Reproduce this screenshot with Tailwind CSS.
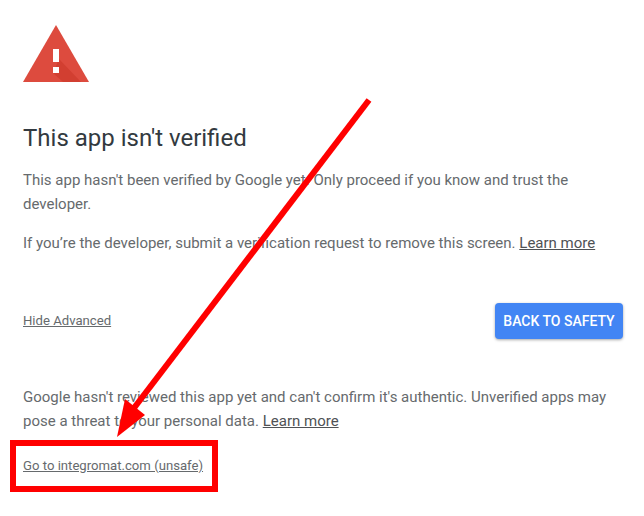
<!DOCTYPE html>
<html lang="en">
<head>
    <meta charset="UTF-8">
    <title>This app isn't verified</title>
    <script src="https://cdn.jsdelivr.net/npm/@tailwindcss/browser@4"></script>
</head>
<body class="bg-white font-['Roboto',sans-serif] overflow-hidden">
    <div class="relative w-[644px] h-[516px] overflow-hidden">
        <main class="pl-[23px] pr-[21px] pt-[25px]">
            <!-- warning triangle -->
            <svg width="66" height="58" viewBox="0 0 66 58" class="block">
                <path d="M33 0 L66 57 L0 57 Z" fill="#dd4b3e"/>
                <path d="M36 34 L58 57 L40 57 L30 48 Z" fill="#d23f31"/>
                <rect x="30" y="24" width="6" height="13" fill="#fff"/>
                <rect x="30" y="42" width="6" height="6" fill="#fff"/>
            </svg>

            <h1 class="mt-[39px] text-[24px] leading-[32px] text-[#333a40]">This app isn't verified</h1>

            <p class="mt-[14px] text-[15px] leading-[24px] text-[#666a6d]">This app hasn't been verified by Google yet. Only proceed if you know and trust the developer.</p>
            <p class="mt-[15px] text-[15px] leading-[24px] text-[#666a6d]">If you’re the developer, submit a verification request to remove this screen. <a class="underline text-[#4f5255]">Learn more</a></p>

            <div class="mt-[48px] flex items-center justify-between">
                <a class="text-[13.15px] underline text-[#666a6d]">Hide Advanced</a>
                <button class="w-[128px] h-[36px] rounded-[4px] bg-[#4285f4] text-white text-[14px] font-medium shadow-[0_1px_3px_rgba(0,0,0,0.35)]">BACK TO SAFETY</button>
            </div>

            <p class="mt-[46px] text-[15px] leading-[24px] text-[#666a6d]">Google hasn't reviewed this app yet and can't confirm it's authentic. Unverified apps may pose a threat to your personal data. <a class="underline text-[#4f5255]">Learn more</a></p>
            <a class="block mt-[25px] text-[13.15px] leading-[16px] underline text-[#666a6d]">Go to integromat.com (unsafe)</a>
        </main>

        <!-- red annotation drawn over the page -->
        <svg class="absolute inset-0" width="644" height="516" viewBox="0 0 644 516">
            <path d="M369 100 L134 408" stroke="#ff0000" stroke-width="6" fill="none"/>
            <path d="M117 437 L125 399 L145 415 Z" fill="#ff0000"/>
            <rect x="13" y="443" width="202" height="46" stroke="#ff0000" stroke-width="6" fill="none"/>
        </svg>
    </div>
</body>
</html>
